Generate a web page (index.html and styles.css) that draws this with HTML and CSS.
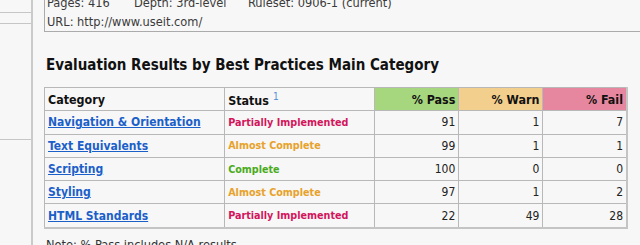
FILE: index.html
```html
<!DOCTYPE html>
<html>
<head>
<meta charset="utf-8">
<link rel="stylesheet" href="styles.css">
</head>
<body>
<div class="sidebar">
  <div class="sb-item sb1"></div>
  <div class="sb-item sb2"></div>
  <div class="sb-item sb3"></div>
</div>
<div class="main">
  <div class="info">
    <div class="info-row"><span>Pages: 416</span><span>Depth: 3rd-level</span><span>Ruleset: 0906-1 (current)</span></div>
    <div class="info-url">URL: http://www.useit.com/</div>
  </div>
  <h2 class="title">Evaluation Results by Best Practices Main Category</h2>
  <table class="results">
    <colgroup>
      <col class="c-cat"><col class="c-status"><col class="c-num"><col class="c-num"><col class="c-num">
    </colgroup>
    <thead>
      <tr>
        <th>Category</th>
        <th>Status<sup class="fn">1</sup></th>
        <th class="num pass">% Pass</th>
        <th class="num warn">% Warn</th>
        <th class="num fail">% Fail</th>
      </tr>
    </thead>
    <tbody>
      <tr><td><a href="#">Navigation &amp; Orientation</a></td><td class="st partial">Partially Implemented</td><td class="num">91</td><td class="num">1</td><td class="num">7</td></tr>
      <tr><td><a href="#">Text Equivalents</a></td><td class="st almost">Almost Complete</td><td class="num">99</td><td class="num">1</td><td class="num">1</td></tr>
      <tr><td><a href="#">Scripting</a></td><td class="st complete">Complete</td><td class="num">100</td><td class="num">0</td><td class="num">0</td></tr>
      <tr><td><a href="#">Styling</a></td><td class="st almost">Almost Complete</td><td class="num">97</td><td class="num">1</td><td class="num">2</td></tr>
      <tr><td><a href="#">HTML Standards</a></td><td class="st partial">Partially Implemented</td><td class="num">22</td><td class="num">49</td><td class="num">28</td></tr>
    </tbody>
  </table>
  <p class="note">Note: % Pass includes N/A results</p>
</div>
</body>
</html>
```
FILE: styles.css
```css
html, body {
  margin: 0;
  padding: 0;
}
body {
  background: #f7f7f7;
  font-family: "DejaVu Sans Condensed", "DejaVu Sans", Verdana, sans-serif;
  color: #222;
  display: flex;
  height: 245px;
  overflow: hidden;
}
.sidebar {
  flex: none;
  width: 31px;
  border-right: 2px solid #cacaca;
}
.sb-item {
  border-bottom: 1px solid #c6c6c6;
}
.sb1 { height: 12px; }
.sb2 { height: 10px; }
.sb3 { height: 115px; }

.main {
  flex: 1;
  padding-left: 11px;
}
.info {
  margin-top: -7px;
  border-left: 1px solid #ababab;
  border-bottom: 1px solid #ababab;
  padding: 0 0 0 2px;
  font-size: 12.7px;
  line-height: 19px;
  color: #3a3a3a;
}
.info-row {
  display: grid;
  grid-template-columns: 87px 114px auto;
}
.title {
  margin: 23px 0 0 2px;
  font-size: 15px;
  line-height: 20px;
  font-weight: bold;
  color: #111;
}
.results {
  margin-top: 12px;
  border-collapse: collapse;
  table-layout: fixed;
  width: 584px;
  font-size: 12px;
  border-right: 2px solid #c4c4c4;
  border-bottom: 2px solid #c4c4c4;
}
.c-cat { width: 180px; }
.c-status { width: 150px; }
.c-num { width: 84px; }
.results th, .results td {
  border: 1px solid #b8b8b8;
  height: 22.3px;
  padding: 0 3px;
  text-align: left;
  white-space: nowrap;
  overflow: hidden;
}
.results th {
  font-weight: bold;
  color: #111;
  font-size: 12.4px;
}
.results .num { text-align: right; }
.results th.pass { background: #a6d67e; }
.results th.warn { background: #f2cf8d; }
.results th.fail { background: #e6879f; }
.fn {
  color: #5a8fd6;
  font-weight: normal;
  font-size: 10px;
  margin-left: 4px;
}
.results a {
  color: #1b5fc9;
  font-weight: bold;
  font-size: 12px;
  text-decoration: underline;
}
.st { font-weight: bold; font-size: 10.7px; }
.partial { color: #d2155c; }
.almost { color: #e8a22a; }
.complete { color: #4aab1c; }
.note {
  margin: 8px 0 0 2px;
  font-size: 12.7px;
  color: #333;
}
```
